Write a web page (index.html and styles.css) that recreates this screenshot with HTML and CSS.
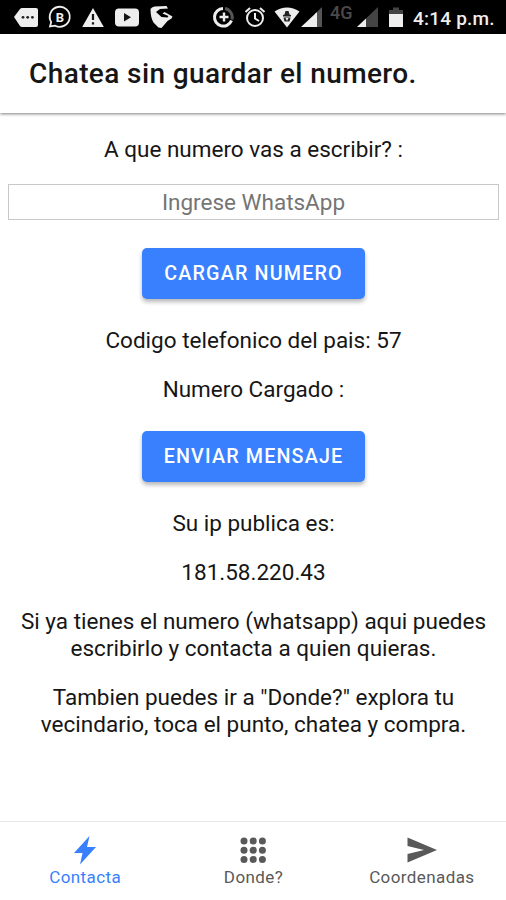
FILE: index.html
```html
<!DOCTYPE html>
<html lang="es">
<head>
<meta charset="utf-8">
<title>Chatea sin guardar el numero.</title>
<link rel="stylesheet" href="styles.css">
</head>
<body>
<div class="status">
  <svg class="status-icons" width="180" height="34" viewBox="0 0 180 34">
    <path fill="#eee" d="M14 17l6-8q1-1 2-1h14q2 0 2 2v15q0 2-2 2H22q-1 0-2-1z"/>
    <g fill="#222"><circle cx="23" cy="17.3" r="1.4"/><circle cx="27.7" cy="17.3" r="1.4"/><circle cx="32.4" cy="17.3" r="1.4"/></g>
    <path fill="none" stroke="#eee" stroke-width="1.8" d="M50 26.5l1.2-4.5a10 10 0 1 1 4 3.7z"/>
    <text class="badge-letter" x="59.8" y="22">B</text>
    <path fill="#eee" d="M93 8l10.800 19H82.200z"/>
    <path stroke="#151515" stroke-width="2.200" d="M93 14v6M93 22.300v2.300"/>
    <rect x="115" y="8.500" width="24" height="18" rx="4" fill="#eee"/>
    <path fill="#151515" d="M124 13l7 4.200-7 4.300z"/>
    <path fill="#eee" d="M150.500 9q1-2 4-2.500l12-.5 1.500 2.500-8 .5-4 3 5.500 5 6 .5 1-1.500-6-2.500 2-1.500 8 4.500-1 2-4 2.500-6 7-3-.5-5-5q-3-5-3-13.500z"/>
  </svg>
  <svg class="status-icons" width="206" height="34" viewBox="204 0 206 34">
    <path fill="none" stroke="#eee" stroke-width="3" d="M223 8.500a8.800 8.800 0 1 0 8.500 12"/>
    <path fill="none" stroke="#555" stroke-width="3" d="M225 8.500a9 9 0 0 1 7 11"/>
    <path stroke="#eee" stroke-width="2.400" d="M224 12.500v9M219.500 17h9"/>
    <g fill="none" stroke="#eee" stroke-width="2"><circle cx="255" cy="18" r="8"/><path d="M245.500 12l4.500-4M264.500 12L260 8M255 13v5.500l4 2.500"/></g>
    <path fill="#eee" d="M274.500 11.500q12.500-8 25 0L287 27.500z"/>
    <path fill="#222" d="M284.500 14.500l1-3.500h3l1 3.500 1.500.5v1.500h-8V15zM283.500 17.500h7l-1 4h-5z"/>
    <path fill="#eee" d="M285.500 18h3l-1.500 3z"/>
    <path fill="#eee" d="M301 27l15-14v14z"/>
    <path fill="#eee" d="M315 14l2-2v15h-2z"/>
    <path fill="#555" d="M317 12l5-5v20h-5z"/>
    <text class="network" x="330" y="19">4G</text>
    <path fill="#444" d="M357 27L378 7v20z"/>
    <path fill="#eee" d="M357 27l9-8.500V27z"/>
    <path fill="#444" d="M393 7.500h6v2.500h4v4h-14v-4h4z"/>
    <path fill="#eee" d="M389 14h14v13h-14z"/>
  </svg>
  <span class="clock">4:14 p.m.</span>
</div>
<header class="header"><h1>Chatea sin guardar el numero.</h1></header>
<main class="content">
  <p class="question">A que numero vas a escribir? :</p>
  <input class="phone" type="tel" placeholder="Ingrese WhatsApp">
  <button class="btn load">CARGAR NUMERO</button>
  <p>Codigo telefonico del pais: 57</p>
  <p>Numero Cargado :</p>
  <button class="btn send">ENVIAR MENSAJE</button>
  <p>Su ip publica es:</p>
  <p>181.58.220.43</p>
  <p>Si ya tienes el numero (whatsapp) aqui puedes escribirlo y contacta a quien quieras.</p>
  <p>Tambien puedes ir a "Donde?" explora tu vecindario, toca el punto, chatea y compra.</p>
</main>
<nav class="tabs">
  <a class="tab active"><svg width="32" height="32" viewBox="0 0 32 32"><path fill="currentColor" d="M20.500 2L5 19h8.500L11 30.500 27 13h-9z"/></svg><span>Contacta</span></a>
  <a class="tab"><svg width="32" height="32" viewBox="0 0 32 32"><g fill="currentColor"><circle cx="7" cy="7" r="3.500"/><circle cx="16.200" cy="7" r="3.500"/><circle cx="25.400" cy="7" r="3.500"/><circle cx="7" cy="16.200" r="3.500"/><circle cx="16.200" cy="16.200" r="3.500"/><circle cx="25.400" cy="16.200" r="3.500"/><circle cx="7" cy="25.400" r="3.500"/><circle cx="16.200" cy="25.400" r="3.500"/><circle cx="25.400" cy="25.400" r="3.500"/></g></svg><span>Donde?</span></a>
  <a class="tab"><svg width="32" height="32" viewBox="0 0 32 32"><path fill="currentColor" d="M1.500 3.500L31 16 1.500 28.500V20L18 16 1.500 12z"/></svg><span>Coordenadas</span></a>
</nav>
</body>
</html>
```
FILE: styles.css
```css
* { box-sizing: border-box; }
body {
  margin: 0;
  height: 900px;
  display: flex;
  flex-direction: column;
  overflow: hidden;
  background: #fff;
  color: #161616;
  font-family: Roboto, sans-serif;
  font-size: 22.5px;
}
.status {
  flex: none;
  height: 34px;
  display: flex;
  align-items: center;
  background: #000;
  color: #eee;
}
.status-icons { flex: none; display: block; }
.status-icons + .status-icons { margin-left: 24px; }
.badge-letter { font: 700 13px Roboto, sans-serif; fill: #eee; text-anchor: middle; }
.network { font: 500 18px Roboto, sans-serif; fill: #4a4a4a; }
.clock { margin: 3px 0 0 3px; font-size: 19px; font-weight: 500; letter-spacing: 0.2px; white-space: nowrap; }
.header {
  flex: none;
  height: 79px;
  display: flex;
  align-items: center;
  padding-left: 29px;
  box-shadow: 0 1px 3px rgba(0, 0, 0, 0.5);
}
.header h1 { margin: 0; font-size: 28px; font-weight: 500; letter-spacing: 0.4px; }
.content {
  flex: 1;
  padding: 0 6px 0 7px;
  display: flex;
  flex-direction: column;
  align-items: center;
  text-align: center;
}
.content p { margin: 22px 0 0; line-height: 27px; }
.content .question { margin-top: 23px; }
.phone {
  width: 491px;
  height: 36px;
  margin-top: 21px;
  padding: 0;
  border: 1px solid #c8c8c8;
  background: #fff;
  font: 22.5px Roboto, sans-serif;
  text-align: center;
}
.phone::placeholder { color: #757575; }
.btn {
  flex: none;
  width: 223px;
  height: 51px;
  padding: 0;
  border: 0;
  border-radius: 5px;
  background: #3880ff;
  box-shadow: 0 3px 4px rgba(0, 0, 0, 0.28);
  color: #fff;
  font: 500 19.7px Roboto, sans-serif;
  letter-spacing: 1.18px;
}
.load { margin: 28px 0 6px; }
.send { margin: 28px 0 6px; }
.tabs {
  flex: none;
  height: 79px;
  display: flex;
  padding-left: 1px;
  border-top: 1px solid #e8e8e8;
}
.tab {
  flex: 1;
  display: flex;
  flex-direction: column;
  align-items: center;
  padding-top: 12px;
  color: #595959;
  font-size: 17px;
  letter-spacing: 0.4px;
  line-height: 20px;
}
.tab span { margin-top: 1px; }
.tab.active { color: #3880ff; }
```
